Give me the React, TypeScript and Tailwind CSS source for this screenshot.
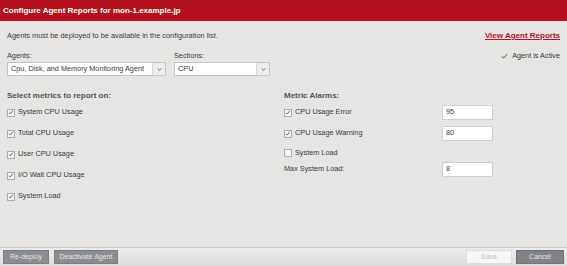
import React from "react";

const font = { fontFamily: '"Liberation Sans", Arial, sans-serif' };

function Check({ checked }: { checked: boolean }) {
  return (
    <span className="inline-flex h-[8px] w-[8px] shrink-0 items-center justify-center border border-[#a9acb3] bg-[#f4f4f6]">
      {checked && (
        <svg viewBox="0 0 8 8" className="h-[7px] w-[7px]">
          <path d="M1.6 4.4 L3 6 L6.4 1.6" fill="none" stroke="#3d4a7a" strokeWidth="1.1" />
        </svg>
      )}
    </span>
  );
}

function Select({ value, width }: { value: string; width: string }) {
  return (
    <div className={`flex h-[14px] ${width} border border-[#c4c4c4] bg-white`}>
      <span className="flex flex-1 items-center pl-[3px] text-[7.3px] text-[#3a3a3a]">{value}</span>
      <span className="flex w-[13px] items-center justify-center border-l border-[#d6d6d6] bg-[#ececec]">
        <svg viewBox="0 0 6 4" className="h-[3px] w-[5px]">
          <path d="M0.5 0.5 L3 3.2 L5.5 0.5" fill="none" stroke="#555" strokeWidth="1.1" />
        </svg>
      </span>
    </div>
  );
}

function NumInput({ value }: { value: string }) {
  return (
    <div className="flex h-[15px] w-[51px] items-center border border-[#cfcfcf] bg-white pl-[3px] text-[7.3px] text-[#3a3a3a]">
      {value}
    </div>
  );
}

const metrics = [
  "System CPU Usage",
  "Total CPU Usage",
  "User CPU Usage",
  "I/O Wait CPU Usage",
  "System Load",
];

export default function App() {
  return (
    <div style={font} className="flex h-[266px] w-[567px] flex-col bg-[#e6e5e3] text-[#3a3a3a]">
      <div className="flex h-[21px] items-center bg-[#b3121d] px-[3px] text-[8px] font-bold text-white">
        Configure Agent Reports for mon-1.example.jp
      </div>

      <div className="flex-1 px-[7px]">
        <div className="flex h-[29px] items-center justify-between pt-[1px]">
          <span className="text-[7.4px]">Agents must be deployed to be available in the configuration list.</span>
          <span className="text-[8px] font-bold text-[#b3121d] underline">View Agent Reports</span>
        </div>

        <div className="flex items-start justify-between">
          <div className="flex gap-[8px]">
            <div className="flex flex-col">
              <span className="h-[12px] pt-[1px] text-[7.3px]">Agents:</span>
              <Select value="Cpu, Disk, and Memory Monitoring Agent" width="w-[159px]" />
            </div>
            <div className="flex flex-col">
              <span className="h-[12px] pt-[1px] text-[7.3px]">Sections:</span>
              <Select value="CPU" width="w-[96px]" />
            </div>
          </div>
          <div className="flex items-center gap-[4px] pt-[1px] text-[7.3px]">
            <svg viewBox="0 0 8 6" className="h-[6px] w-[7px]">
              <path d="M0.8 3.2 L3 5.2 L7.2 0.8" fill="none" stroke="#6aa84f" strokeWidth="1.4" />
            </svg>
            Agent is Active
          </div>
        </div>

        <div className="mt-[14px] grid grid-cols-[277px_1fr]">
          <div className="flex flex-col">
            <div className="h-[12px] text-[8px] font-bold text-[#555]">Select metrics to report on:</div>
            {metrics.map((m) => (
              <div key={m} className="flex h-[21px] items-center gap-[3px] text-[7.3px]">
                <Check checked />
                {m}
              </div>
            ))}
          </div>
          <div className="flex flex-col">
            <div className="h-[12px] text-[8px] font-bold text-[#555]">Metric Alarms:</div>
            <div className="flex h-[21px] items-center text-[7.3px]">
              <span className="flex w-[158px] items-center gap-[3px]">
                <Check checked />
                CPU Usage Error
              </span>
              <NumInput value="95" />
            </div>
            <div className="flex h-[21px] items-center text-[7.3px]">
              <span className="flex w-[158px] items-center gap-[3px]">
                <Check checked />
                CPU Usage Warning
              </span>
              <NumInput value="80" />
            </div>
            <div className="flex h-[18px] items-center gap-[3px] text-[7.3px]">
              <Check checked={false} />
              System Load
            </div>
            <div className="flex h-[15px] items-center text-[7.3px]">
              <span className="w-[158px]">Max System Load:</span>
              <NumInput value="8" />
            </div>
          </div>
        </div>
      </div>

      <div className="flex h-[19px] items-center justify-between border-t border-[#c9c9c9] bg-gradient-to-b from-[#ececec] to-[#dcdcdc] px-[3px]">
        <div className="flex gap-[5px]">
          <button className="h-[14px] w-[46px] border border-[#7a7e82] bg-[#8a8e92] text-[7px] text-[#e8e8e8]">Re-deploy</button>
          <button className="h-[14px] w-[64px] border border-[#7a7e82] bg-[#8a8e92] text-[7px] text-[#e8e8e8]">Deactivate Agent</button>
        </div>
        <div className="flex gap-[4px]">
          <button className="h-[14px] w-[46px] border border-[#dcdcdc] bg-[#f6f6f6] text-[7px] text-[#bdbdbd]">Save</button>
          <button className="h-[14px] w-[48px] border border-[#6f7377] bg-[#7f8387] text-[7px] text-[#e8e8e8]">Cancel</button>
        </div>
      </div>
    </div>
  );
}
